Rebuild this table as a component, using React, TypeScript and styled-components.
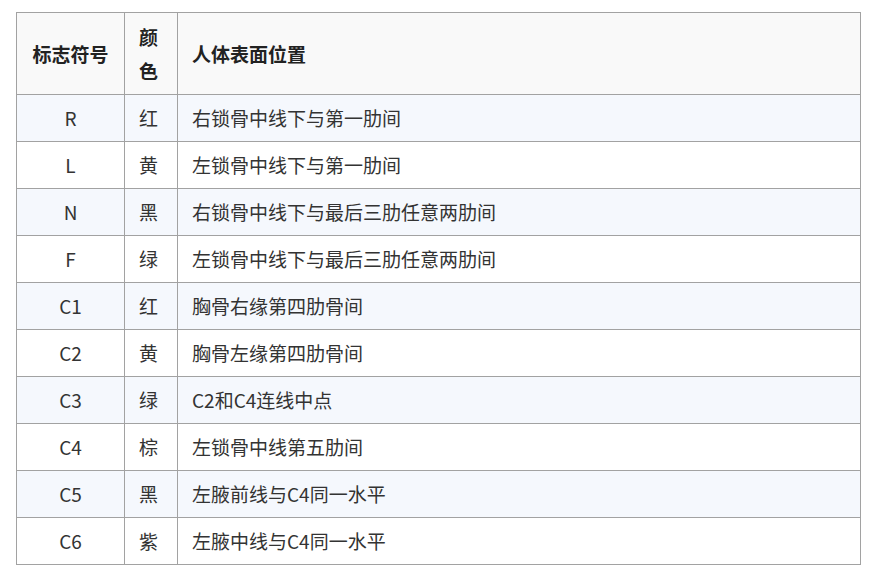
import styled, { createGlobalStyle } from 'styled-components';

const GlobalStyle = createGlobalStyle`
  body {
    margin: 0;
    background: #fff;
    font-family: "Noto Sans CJK SC", "Noto Sans", sans-serif;
  }
`;

const rows = [
  { mark: 'R', color: '红', place: '右锁骨中线下与第一肋间' },
  { mark: 'L', color: '黄', place: '左锁骨中线下与第一肋间' },
  { mark: 'N', color: '黑', place: '右锁骨中线下与最后三肋任意两肋间' },
  { mark: 'F', color: '绿', place: '左锁骨中线下与最后三肋任意两肋间' },
  { mark: 'C1', color: '红', place: '胸骨右缘第四肋骨间' },
  { mark: 'C2', color: '黄', place: '胸骨左缘第四肋骨间' },
  { mark: 'C3', color: '绿', place: 'C2和C4连线中点' },
  { mark: 'C4', color: '棕', place: '左锁骨中线第五肋间' },
  { mark: 'C5', color: '黑', place: '左腋前线与C4同一水平' },
  { mark: 'C6', color: '紫', place: '左腋中线与C4同一水平' },
];

export default function App() {
  return (
    <>
      <GlobalStyle />
      <Wrap>
        <Table>
          <colgroup>
            <Col $w={108} />
            <Col $w={53} />
            <Col />
          </colgroup>
          <thead>
            <tr>
              <Th $center>标志符号</Th>
              <Th>颜色</Th>
              <Th>人体表面位置</Th>
            </tr>
          </thead>
          <tbody>
            {rows.map((r, i) => (
              <Row key={r.mark} $tinted={i % 2 === 0}>
                <Td $center>{r.mark}</Td>
                <Td>{r.color}</Td>
                <Td>{r.place}</Td>
              </Row>
            ))}
          </tbody>
        </Table>
      </Wrap>
    </>
  );
}

const Wrap = styled.div`
  padding: 12px 16px;
`;

const Table = styled.table`
  width: 100%;
  border-collapse: collapse;
  table-layout: fixed;
  font-size: 19px;
  line-height: 34px;
  color: #333;
`;

const Col = styled.col<{ $w?: number }>`
  width: ${(p) => (p.$w ? `${p.$w}px` : 'auto')};
`;

const Th = styled.th<{ $center?: boolean }>`
  background: #f9f9f9;
  border: 1px solid #a2a2a2;
  padding: 6.5px 14px;
  font-weight: 700;
  color: #222;
  text-align: ${(p) => (p.$center ? 'center' : 'left')};
`;

const Row = styled.tr<{ $tinted: boolean }>`
  background: ${(p) => (p.$tinted ? '#f5f8fd' : '#fff')};
`;

const Td = styled.td<{ $center?: boolean }>`
  border: 1px solid #a2a2a2;
  padding: 6px 14px;
  text-align: ${(p) => (p.$center ? 'center' : 'left')};
  white-space: nowrap;
`;
